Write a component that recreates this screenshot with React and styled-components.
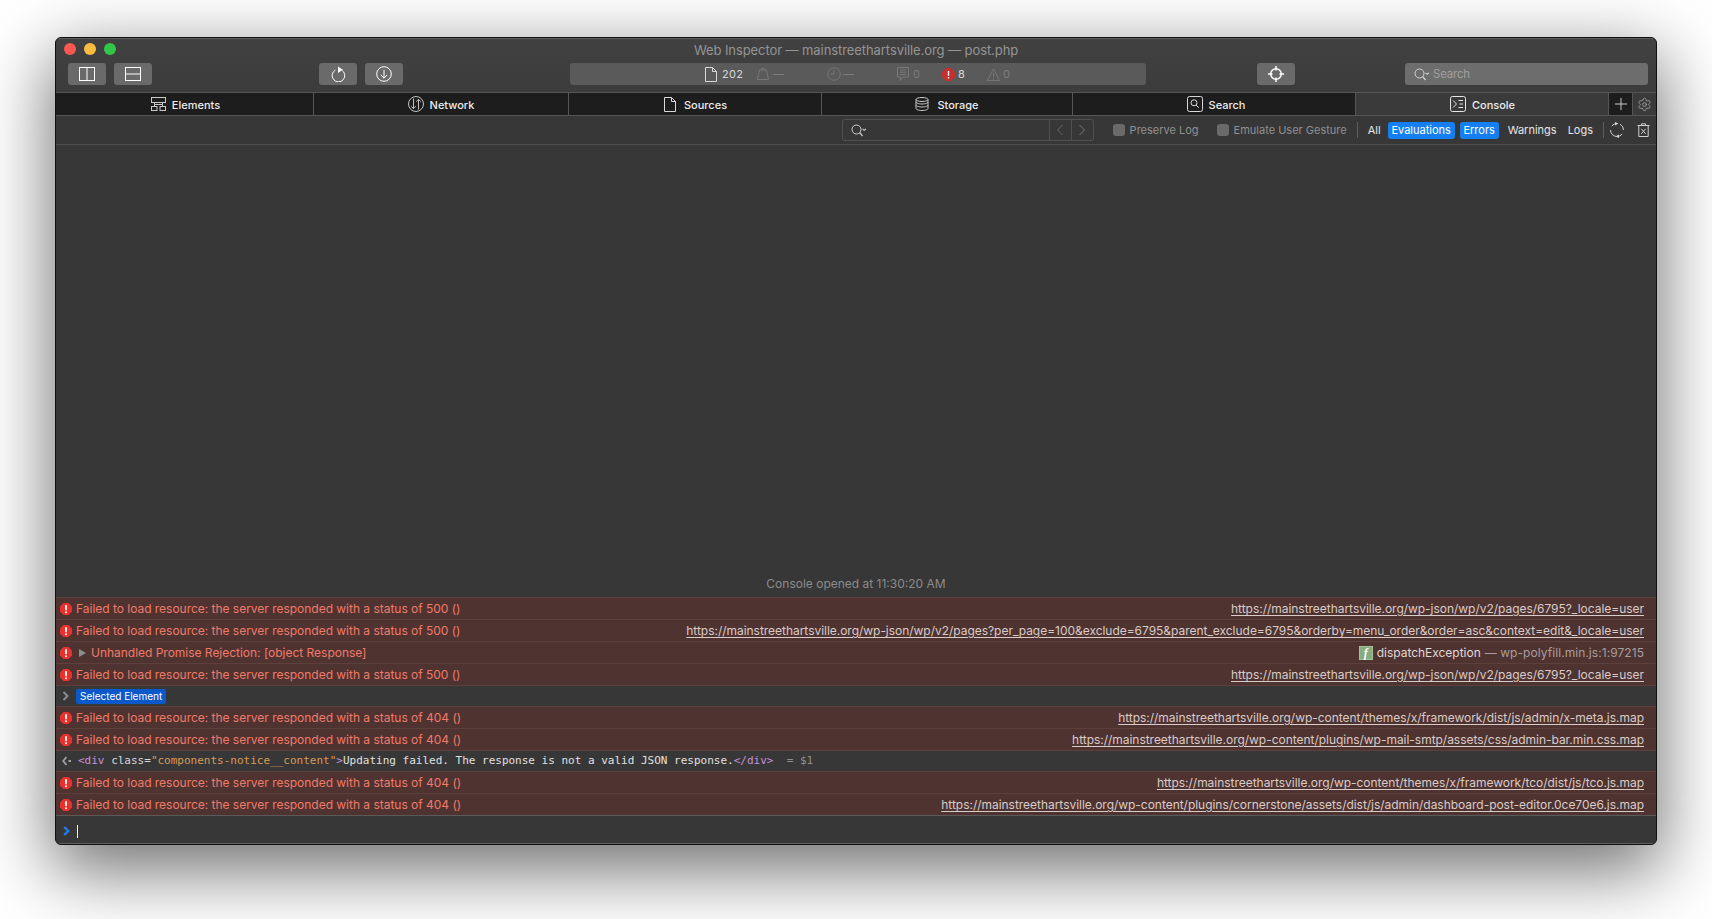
import React from "react";
import styled, { createGlobalStyle } from "styled-components";
import { Settings } from "lucide-react";

const Global = createGlobalStyle`
  html, body { margin: 0; padding: 0; background: #fff; }
  body { font-family: Inter, "Liberation Sans", sans-serif; overflow: hidden; }
`;

const Page = styled.div`
  width: 1712px; height: 919px; box-sizing: border-box; padding: 37px 55px 74px; background: #fff;
`;
const Window = styled.div`
  height: 808px; box-sizing: border-box; display: flex; flex-direction: column;
  background: #373737; border: 1px solid #101010; border-radius: 6px; overflow: hidden;
  box-shadow: 0 22px 70px 4px rgba(0,0,0,.56);
`;
const Header = styled.div`
  flex: none; height: 54px; background: linear-gradient(#414141, #3c3c3c); box-shadow: inset 0 1px 0 #5c5c5c;
`;
const TitleBar = styled.div`
  height: 25px; display: grid; grid-template-columns: 1fr auto 1fr; align-items: center;
`;
const Lights = styled.div`display: flex; gap: 8px; padding-left: 8px; margin-bottom: 3px;`;
const Light = styled.span`width: 12px; height: 12px; border-radius: 50%; background: ${p => p.$c};`;
const Title = styled.div`font-size: 13px; color: #959595; letter-spacing: -.08px; margin-bottom: 2px;`;
const Toolbar = styled.div`display: flex; align-items: flex-start; height: 29px; padding-left: 12px;`;
const ToolButton = styled.div`
  width: 38px; height: 22px; border-radius: 3px; background: #6a6a6a; display: flex; align-items: center; justify-content: center;
  margin-left: ${p => p.$ml || 0}px; flex: none;
`;
const Dashboard = styled.div`
  width: 576px; height: 22px; margin-left: 167px; padding-left: 135px; box-sizing: border-box; background: #5a5a5a; border-radius: 3px; display: flex; align-items: center; flex: none;
`;
const DashItem = styled.div`
  display: flex; align-items: center; gap: ${p => p.$gap}px; width: ${p => p.$w}px; font-size: 11px; letter-spacing: .3px; color: ${p => p.$off ? "#7d7d7d" : "#d8d8d8"}; flex: none;
`;
const ToolSearch = styled.div`
  width: 243px; height: 22px; margin-left: 110px; background: #6d6d6d; border-radius: 3px; display: flex; align-items: center; gap: 3px; padding-left: 9px; box-sizing: border-box; font-size: 11.5px; letter-spacing: -.2px; color: #9f9f9f; flex: none;
`;
const TabBar = styled.div`display: flex; height: 24px; box-sizing: border-box; border-top: 1px solid #555; border-bottom: 1px solid #555; flex: none;`;
const Tab = styled.div`
  width: ${p => p.$w}px; flex: none; box-sizing: border-box; display: flex; align-items: center; justify-content: center; gap: ${p => p.$gap || 6}px;
  padding-left: ${p => p.$pl || 0}px;
  background: ${p => p.$active ? "#3a3a3a" : "#1d1d1d"}; border-right: ${p => p.$last ? "none" : "1px solid #555"};
  font-size: 11px; font-weight: 500; color: #ececec;
`;
const TabLabel = styled.span`padding-top: 2px;`;
const FilterBar = styled.div`
  height: 29px; flex: none; box-sizing: border-box; display: flex; align-items: center; justify-content: flex-end; border-bottom: 1px solid #4f4f4f; padding-right: 6px; font-size: 11px; color: #e6e6e6;
`;
const FilterSearch = styled.div`
  width: 252px; height: 22px; box-sizing: border-box; border: 1px solid #505050; border-radius: 3px; display: flex; align-items: center; flex: none; margin-right: 19px;
`;
const FilterSearchIcon = styled.div`flex: 1; padding-left: 8px; display: flex; align-items: center;`;
const Nav = styled.div`width: 21px; height: 100%; border-left: 1px solid #505050; display: flex; align-items: center; justify-content: center;`;
const Check = styled.span`width: 12px; height: 12px; border-radius: 3px; background: #6a6a6a; flex: none; margin-right: 5px;`;
const CheckLabel = styled.span`color: #909090; margin-right: ${p => p.$mr}px; white-space: nowrap;`;
const Sep = styled.span`width: 1px; height: 16px; background: #5e5e5e; flex: none; margin: 0 ${p => p.$mr}px 0 ${p => p.$ml}px;`;
const Scope = styled.span`
  height: 17px; line-height: 17px; border-radius: 3px; margin-left: ${p => p.$ml}px; white-space: nowrap; text-align: center; flex: none;
  ${p => p.$w ? `width: ${p.$w}px;` : ""}
  background: ${p => p.$on ? "#157ff2" : "transparent"}; color: ${p => p.$on ? "#fff" : "#e6e6e6"};
`;
const Log = styled.div`flex: 1; display: flex; flex-direction: column; justify-content: flex-end; min-height: 0;`;
const Opened = styled.div`height: 22px; line-height: 18px; text-align: center; font-size: 12px; color: #8b8b8b;`;
const ErrorRow = styled.div`
  height: 22px; box-sizing: border-box; display: flex; align-items: center; padding: 0 12px 0 4px; background: #4f3331; border-top: 1px solid #5d3f3c; font-size: 12px; letter-spacing: -.02px; color: #ef7a69; white-space: nowrap; flex: none;
`;
const ErrorIcon = styled.svg`width: 12px; height: 12px; flex: none; margin-right: 4px;`;
const Disclosure = styled.span`
  width: 0; height: 0; border-style: solid; border-width: 4.5px 0 4.5px 7px; border-color: transparent transparent transparent #8d8d8d; margin: 0 5px 0 3px; flex: none;
`;
const Msg = styled.span`flex: 1;`;
const Source = styled.a`color: #d9cbc8; text-decoration: underline; text-underline-offset: 2px; letter-spacing: -.03px;`;
const CallFrame = styled.span`display: flex; align-items: center; gap: 4px; color: #e3d6d3;`;
const FuncBadge = styled.span`
  width: 14px; height: 14px; background: #86ac7f; border: 1px solid #a3c29c; box-sizing: border-box; color: #fff; font: italic bold 12px/12px "Liberation Serif", serif; text-align: center;
`;
const Dim = styled.span`color: #a99e9c; letter-spacing: .06px;`;
const CodeDim = styled.span`color: #8f8f8f;`;
const PlainRow = styled.div`
  height: 21px; box-sizing: border-box; display: flex; align-items: center; padding-left: 6px; flex: none; border-top: 1px solid #5d3f3c;
`;
const SelectedBadge = styled.span`
  background: #0a58ca; color: #fff; font-size: 10px; line-height: 15px; height: 15px; padding: 0 4px; border-radius: 2px; margin-left: 6px;
`;
const Code = styled.span`font-family: "DejaVu Sans Mono", monospace; font-size: 11px; white-space: pre; color: #e0e0e0; margin-left: 7px; padding-bottom: 2px;`;
const Tag = styled.span`color: ${p => p.$c};`;
const Prompt = styled.div`
  flex: none; height: 29px; box-sizing: border-box; border-top: 1px solid #5a5a5a; box-shadow: inset 0 -1px 0 #5f5f5f; display: flex; align-items: center; padding: 2px 0 0 7px; gap: 7px;
`;
const Caret = styled.span`width: 1px; height: 13px; background: #fff;`;

const S = { fill: "none", stroke: "currentColor", strokeWidth: 1 };
const Ic = ({ w = 16, h = 16, c = "#fff", ml = 0, children, ...r }) => (
  <svg width={w} height={h} viewBox={`0 0 ${w} ${h}`} style={{ color: c, flex: "none", display: "block", marginLeft: ml }} {...S} {...r}>{children}</svg>
);

const Mag = ({ c = "#d0d0d0" }) => (
  <Ic w={16} h={13} c={c}>
    <circle cx="5.5" cy="5.5" r="4.500" /><path d="M8.700 8.700 11.500 12" strokeWidth="1.300" /><path d="M11.500 4.800l1.700 1.500 1.800-1.500" strokeWidth="1.100" />
  </Ic>
);
const ErrIcon = () => (
  <ErrorIcon viewBox="0 0 12 12">
    <path d="M3.500 0h5L12 3.500v5L8.500 12h-5L0 8.500v-5z" fill="#e9302c" />
    <rect x="5.100" y="2" width="1.800" height="5.400" rx=".8" fill="#fff" /><circle cx="6" cy="9.200" r="1" fill="#fff" />
  </ErrorIcon>
);

const R1 = { m: "Failed to load resource: the server responded with a status of 500 ()", u: "https://mainstreethartsville.org/wp-json/wp/v2/pages/6795?_locale=user" };
const E404 = "Failed to load resource: the server responded with a status of 404 ()";

const Err = ({ m, u }) => (
  <ErrorRow><ErrIcon /><Msg>{m}</Msg><Source>{u}</Source></ErrorRow>
);

const TabItem = ({ w, active, last, gap, pl, icon, label }) => (
  <Tab $w={w} $active={active} $last={last} $gap={gap} $pl={pl}>{icon}{label && <TabLabel>{label}</TabLabel>}</Tab>
);

export default function App() {
  return (
    <Page>
      <Global />
      <Window>
        <Header>
          <TitleBar>
            <Lights>
              <Light $c="#fc5753" /><Light $c="#fdbc40" /><Light $c="#33c748" />
            </Lights>
            <Title>Web Inspector — mainstreethartsville.org — post.php</Title>
            <span />
          </TitleBar>
          <Toolbar>
            <ToolButton><Ic w={16} h={14}><rect x=".5" y=".5" width="15" height="13" /><path d="M8 0v14" /></Ic></ToolButton>
            <ToolButton $ml={8}><Ic w={16} h={14}><rect x=".5" y=".5" width="15" height="13" /><path d="M0 7h16" /></Ic></ToolButton>
            <ToolButton $ml={167}>
              <Ic w={15} h={16}><path d="M10.800 4.200a6.300 6.300 0 1 1-6.500-.1" /><path d="M7 0.500l4.800 3.300L7 7z" fill="#fff" stroke="none" /></Ic>
            </ToolButton>
            <ToolButton $ml={8}>
              <Ic w={16} h={16}><circle cx="8" cy="8" r="7.300" /><path d="M8 3.800v8.400M4.800 9l3.200 3.200L11.200 9" /></Ic>
            </ToolButton>
            <Dashboard>
              <DashItem $w={52} $gap={5}>
                <Ic w={12} h={15} c="#d8d8d8"><path d="M.5.5h7l4 4v10h-11zM7.500.5v4h4" /></Ic><span>202</span>
              </DashItem>
              <DashItem $w={70} $gap={4} $off>
                <Ic w={12} h={12} c="#777"><path d="M.5 11.500 2.500 2h7l2 9.500z" /><path d="M4 2 4.500.5h3L8 2" /></Ic><span>—</span>
              </DashItem>
              <DashItem $w={70} $gap={2} $off>
                <Ic w={14} h={14} c="#777"><circle cx="7" cy="7" r="6.300" /><path d="M7 2.500V7H3.500" /></Ic><span>—</span>
              </DashItem>
              <DashItem $w={45} $gap={4} $off>
                <Ic w={12} h={14} c="#777"><path d="M.5.5h11v9.500H6L3.500 13.500V10h-3z" /><path d="M3 3h6M3 5.200h6M3 7.500h6" /></Ic><span>0</span>
              </DashItem>
              <DashItem $w={45} $gap={3}>
                <svg width="13" height="13" viewBox="0 0 13 13"><path d="M4 0h5l4 4v5l-4 4H4L0 9V4z" fill="#c4302f" /><rect x="5.800" y="3" width="1.400" height="4.800" fill="#fff" /><rect x="5.800" y="9" width="1.400" height="1.400" fill="#fff" /></svg>
                <span>8</span>
              </DashItem>
              <DashItem $w={30} $gap={3} $off>
                <Ic w={13} h={13} c="#777"><path d="M6.500.8 12.500 12.500H.5z" /><path d="M6.500 4.500v4.500M6.500 10v1.300" /></Ic><span>0</span>
              </DashItem>
            </Dashboard>
            <ToolButton $ml={111}>
              <Ic w={16} h={16} strokeWidth="1.500"><circle cx="8" cy="8" r="5.300" /><path d="M8 0v4.500M8 11.500V16M0 8h4.500M11.500 8H16" /></Ic>
            </ToolButton>
            <ToolSearch><Mag c="#d4d4d4" /><span>Search</span></ToolSearch>
          </Toolbar>
        </Header>
        <TabBar>
          <TabItem w={258} pl={2} label="Elements" icon={<Ic w={15} h={14} c="#c8c8c8"><rect x=".5" y=".5" width="14" height="5" /><rect x=".5" y="9.500" width="5.500" height="4" /><rect x="9" y="9.500" width="5.500" height="4" /><path d="M3.500 5.500V7.500h8v-2M3.500 7.500v2M11.500 7.500v2" /></Ic>} />
          <TabItem w={255} label="Network" icon={<Ic w={16} h={16} c="#c0c0c0"><circle cx="8" cy="8" r="7.500" /><path d="M5.500 2.500v10M3.300 10.300l2.200 2.400 2.200-2.400M10.500 13.500v-10M8.300 5.700l2.200-2.400 2.200 2.400" /></Ic>} />
          <TabItem w={253} gap={8} pl={1} label="Sources" icon={<Ic w={12} h={15} c="#d8d8d8"><path d="M.5.5h7l4 4v10h-11zM7.500.5v4h4" /></Ic>} />
          <TabItem w={251} gap={8} label="Storage" icon={<Ic w={14} h={15} c="#c8c8c8"><ellipse cx="7" cy="2.500" rx="6" ry="2" /><path d="M1 2.500v2.500c0 1.100 2.700 2 6 2s6-.9 6-2V2.500M1 5v3c0 1.100 2.700 2 6 2s6-.9 6-2V5M1 8v3.500c0 1.100 2.700 2 6 2s6-.9 6-2V8" /></Ic>} />
          <TabItem w={283} pl={4} label="Search" icon={<Ic w={16} h={16} c="#d8d8d8"><rect x=".5" y=".5" width="15" height="15" rx="2" /><circle cx="7" cy="6.800" r="3" /><path d="M9.200 9l2.500 2.800" /></Ic>} />
          <TabItem w={253} pl={1} active label="Console" icon={<Ic w={16} h={16} c="#e8e8e8"><rect x=".5" y=".5" width="15" height="15" rx="2" /><path d="M3 4.500 6.500 8 3 11.500" /><path d="M8.500 4.500h4.500M9.500 8h3.500M8.500 11.500h4.500" /></Ic>} />
          <TabItem w={24} icon={<Ic w={12} h={12} c="#c8c8c8"><path d="M6 0v12M0 6h12" /></Ic>} />
          <TabItem w={23} active last icon={<Settings size={15} strokeWidth={1} color="#c4c4c4" />} />
        </TabBar>
        <FilterBar>
          <FilterSearch>
            <FilterSearchIcon><Mag /></FilterSearchIcon>
            <Nav><Ic w={8} h={12} c="#6a6a6a"><path d="M6.500 1 1.500 6l5 5" /></Ic></Nav>
            <Nav><Ic w={8} h={12} c="#7a7a7a"><path d="M1.500 1l5 5-5 5" /></Ic></Nav>
          </FilterSearch>
          <Check /><CheckLabel $mr={18}>Preserve Log</CheckLabel>
          <Check /><CheckLabel $mr={0}>Emulate User Gesture</CheckLabel>
          <Sep $ml={10} $mr={10} />
          <Scope $ml={0}>All</Scope>
          <Scope $on $ml={7} $w={67}>Evaluations</Scope>
          <Scope $on $ml={5} $w={39}>Errors</Scope>
          <Scope $ml={9}>Warnings</Scope>
          <Scope $ml={11}>Logs</Scope>
          <Sep $ml={10} $mr={5} />
          <Ic w={16} h={16} c="#d0d0d0"><path d="M2.800 4A6.500 6.500 0 0 1 8 1.500M11 2.200A6.500 6.500 0 0 1 14.500 8M8 14.500a6.500 6.500 0 0 1-6.500-6.500M13.200 12A6.500 6.500 0 0 1 8 14.500" /><path d="M6 0l3.500 1.500L6 3.500zM10 12.500l-3.500 2L10 16z" fill="#d0d0d0" stroke="none" /></Ic>
          <Ic w={13} h={14} c="#d0d0d0" ml={12}><path d="M.5 2.500h12M4.500 2.500V.8h4v1.700M1.800 2.500v11h9.400v-11M4.300 5.800l4.400 5M8.700 5.800l-4.400 5" /></Ic>
        </FilterBar>
        <Log>
          <Opened>Console opened at 11:30:20 AM</Opened>
          <Err {...R1} />
          <Err m={R1.m} u="https://mainstreethartsville.org/wp-json/wp/v2/pages?per_page=100&exclude=6795&parent_exclude=6795&orderby=menu_order&order=asc&context=edit&_locale=user" />
          <ErrorRow>
            <ErrIcon /><Disclosure /><Msg>Unhandled Promise Rejection: [object Response]</Msg>
            <CallFrame><FuncBadge>f</FuncBadge><span>dispatchException</span><Dim>— wp-polyfill.min.js:1:97215</Dim></CallFrame>
          </ErrorRow>
          <Err {...R1} />
          <PlainRow>
            <Ic w={8} h={10} c="#8d8d8d" strokeWidth="2"><path d="M1.500 1l4 4-4 4" /></Ic>
            <SelectedBadge>Selected Element</SelectedBadge>
          </PlainRow>
          <Err m={E404} u="https://mainstreethartsville.org/wp-content/themes/x/framework/dist/js/admin/x-meta.js.map" />
          <Err m={E404} u="https://mainstreethartsville.org/wp-content/plugins/wp-mail-smtp/assets/css/admin-bar.min.css.map" />
          <PlainRow>
            <Ic w={9} h={10} c="#a0a0a0" strokeWidth="1.800"><path d="M4.500 1 1.200 5l3.300 4M6.500 5H9" /></Ic>
            <Code>
              <Tag $c="#c792d8">&lt;div</Tag> <Tag $c="#d8d8d8">class=</Tag><Tag $c="#d99a57">"components-notice__content"</Tag><Tag $c="#c792d8">&gt;</Tag>Updating failed. The response is not a valid JSON response.<Tag $c="#c792d8">&lt;/div&gt;</Tag><CodeDim>  = $1</CodeDim>
            </Code>
          </PlainRow>
          <Err m={E404} u="https://mainstreethartsville.org/wp-content/themes/x/framework/tco/dist/js/tco.js.map" />
          <Err m={E404} u="https://mainstreethartsville.org/wp-content/plugins/cornerstone/assets/dist/js/admin/dashboard-post-editor.0ce70e6.js.map" />
        </Log>
        <Prompt>
          <Ic w={7} h={10} c="#1a7df0" strokeWidth="2.400"><path d="M1.200 1l4 4-4 4" /></Ic>
          <Caret />
        </Prompt>
      </Window>
    </Page>
  );
}
